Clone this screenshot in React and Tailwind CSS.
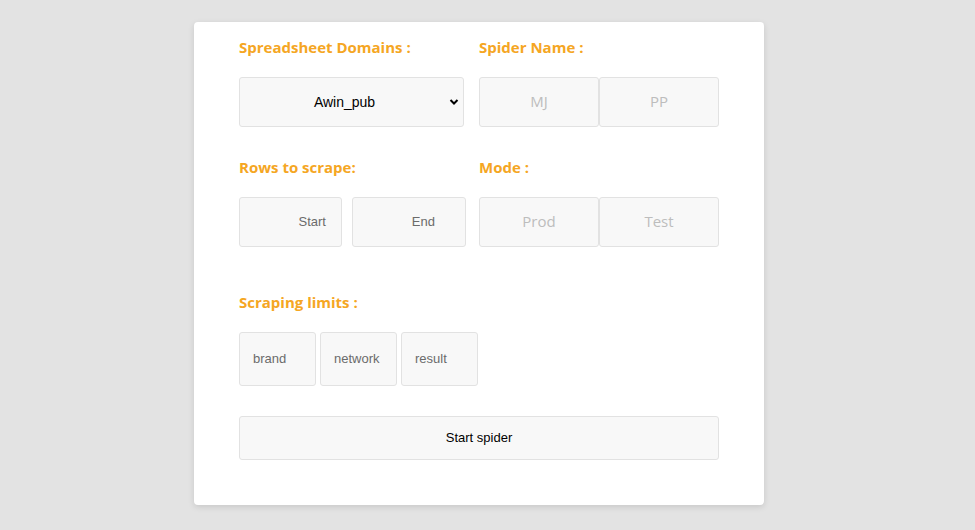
import { useState } from 'react';

const label = "h-5 leading-5 text-[15px] font-bold text-[#f5a623] font-['Open_Sans',sans-serif]";
const box = "bg-[#f8f8f8] border border-[#e2e2e2] rounded-[3px]";

const Toggle = ({ options }) => (
  <div className="flex h-[50px]">
    {options.map((o) => (
      <div
        key={o}
        className={`${box} flex-1 flex items-center justify-center pb-[1px] text-[15px] text-[#bdbdbd] font-['Open_Sans',sans-serif]`}
      >
        {o}
      </div>
    ))}
  </div>
);

export default function App() {
  const [domain] = useState('Awin_pub');

  return (
    <div className="min-h-[530px] bg-[#e3e3e3] pt-[22px] font-['Liberation_Sans',Arial,sans-serif]">
      <div className="w-[570px] ml-[194px] bg-white rounded-[4px] shadow-[0_2px_6px_rgba(0,0,0,0.12)] px-[45px] pt-[15px] pb-[45px]">
        <div className="grid grid-cols-[225px_240px] gap-x-[15px]">
          {/* domains */}
          <div>
            <p className={label}>Spreadsheet Domains :</p>
            <div className={`${box} mt-[20px] h-[50px] relative flex items-center justify-center pr-[14px] text-[14px] text-black`}>
              <span>{domain}</span>
              <svg className="absolute right-[4px] top-[19px]" width="10" height="10" viewBox="0 0 10 10">
                <path d="M1.5 3 L5 6.5 L8.5 3" fill="none" stroke="#000" strokeWidth="2" />
              </svg>
            </div>
          </div>
          <div>
            <p className={label}>Spider Name :</p>
            <div className="mt-[20px]">
              <Toggle options={['MJ', 'PP']} />
            </div>
          </div>

          {/* rows */}
          <div className="mt-[30px]">
            <p className={label}>Rows to scrape:</p>
            <div className="mt-[20px] flex gap-[10px] h-[50px] text-[13px] text-[#6b6b6b]">
              <div className={`${box} shrink-0 w-[103px] flex items-center justify-end pr-[15px]`}>Start</div>
              <div className={`${box} shrink-0 w-[114px] flex items-center justify-end pr-[30px]`}>End</div>
            </div>
          </div>
          <div className="mt-[30px]">
            <p className={label}>Mode :</p>
            <div className="mt-[20px]">
              <Toggle options={['Prod', 'Test']} />
            </div>
          </div>
        </div>

        {/* limits */}
        <div className="mt-[45px]">
          <p className={label}>Scraping limits :</p>
          <div className="mt-[20px] flex gap-[4px] h-[54px] text-[13px] text-[#6b6b6b]">
            {['brand', 'network', 'result'].map((f) => (
              <div key={f} className={`${box} w-[77px] flex items-center pl-[13px]`}>{f}</div>
            ))}
          </div>
        </div>

        <button className={`${box} mt-[30px] w-full h-[44px] text-[13px] text-black`}>
          Start spider
        </button>
      </div>
    </div>
  );
}
